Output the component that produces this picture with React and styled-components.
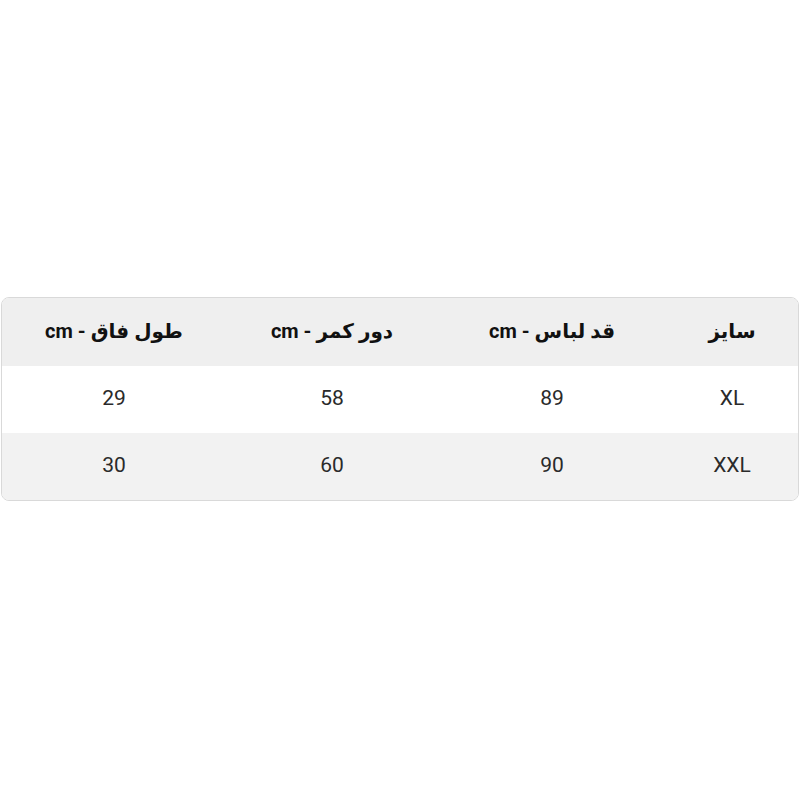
import styled, { createGlobalStyle } from 'styled-components';

const GlobalStyle = createGlobalStyle`
  html, body {
    margin: 0;
    padding: 0;
    background: #fff;
  }
`;

const columns = ['سایز', 'قد لباس - cm', 'دور کمر - cm', 'طول فاق - cm'];

const rows = [
  ['XL', '89', '58', '29'],
  ['XXL', '90', '60', '30'],
];

const App = () => {
  return (
    <>
      <GlobalStyle />
      <Page>
        <Table dir='rtl'>
          <Row $head>
            {columns.map((c) => (
              <HeadCell key={c}>{c}</HeadCell>
            ))}
          </Row>
          {rows.map((r, i) => (
            <Row key={r[0]} $striped={i % 2 === 1}>
              {r.map((v, j) => (
                <Cell key={j}>{v}</Cell>
              ))}
            </Row>
          ))}
        </Table>
      </Page>
    </>
  );
};

export default App;

const Page = styled.div`
  height: 800px;
  display: flex;
  align-items: center;
  padding: 0 1px;
  box-sizing: border-box;
`;

const Table = styled.div`
  width: 100%;
  margin-top: -3px;
  border: 1px solid #d9d9d9;
  border-radius: 8px;
  overflow: hidden;
  font-family: Roboto, 'DejaVu Sans', sans-serif;
  color: #222;
`;

const Row = styled.div`
  display: grid;
  grid-template-columns: 132px 228px 212px 1fr;
  height: ${(p) => (p.$head ? 68 : 67)}px;
  align-items: center;
  background: ${(p) => (p.$head ? '#efefef' : p.$striped ? '#f2f2f2' : '#fff')};
`;

const HeadCell = styled.div`
  text-align: center;
  font-size: 20px;
  font-weight: 700;
  color: #111;
  padding-bottom: 2px;
`;

const Cell = styled.div`
  text-align: center;
  font-size: 21px;
  color: #2a2a2a;
  padding-bottom: 3px;
`;
